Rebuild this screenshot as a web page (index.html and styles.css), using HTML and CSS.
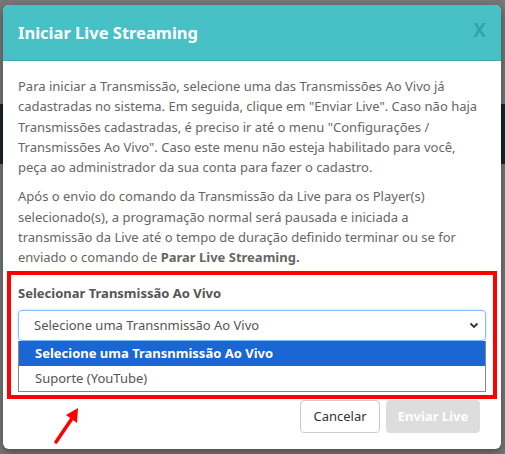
FILE: index.html
```html
<!DOCTYPE html>
<html lang="pt-BR">
<head>
    <meta charset="UTF-8">
    <meta name="viewport" content="width=device-width, initial-scale=1.0">
    <title>Iniciar Live Streaming</title>
    <link rel="stylesheet" href="styles.css">
</head>
<body>
    <div class="modal">
        <div class="modal-header">
            <h4 class="modal-title">Iniciar Live Streaming</h4>
            <span class="close">X</span>
        </div>

        <div class="modal-body">
            <p>Para iniciar a Transmissão, selecione uma das Transmissões Ao Vivo já cadastradas no sistema. Em seguida, clique em "Enviar Live". Caso não haja Transmissões cadastradas, é preciso ir até o menu "Configurações / Transmissões Ao Vivo". Caso este menu não esteja habilitado para você, peça ao administrador da sua conta para fazer o cadastro.</p>
            <p>Após o envio do comando da Transmissão da Live para os Player(s) selecionado(s), a programação normal será pausada e iniciada a transmissão da Live até o tempo de duração definido terminar ou se for enviado o comando de <b>Parar Live Streaming.</b></p>

            <div class="highlight">
                <label class="field-label">Selecionar Transmissão Ao Vivo</label>
                <div class="select-box">
                    <span>Selecione uma Transnmissão Ao Vivo</span>
                    <svg class="chevron" width="10" height="7" viewBox="0 0 10 7">
                        <path d="M1.5 1.5 L5 5 L8.5 1.5" fill="none" stroke="#333" stroke-width="1.8"/>
                    </svg>
                </div>
                <ul class="options">
                    <li class="selected">Selecione uma Transnmissão Ao Vivo</li>
                    <li>Suporte (YouTube)</li>
                </ul>
            </div>
        </div>

        <div class="modal-footer">
            <button class="btn btn-default">Cancelar</button>
            <button class="btn btn-disabled">Enviar Live</button>
        </div>

        <svg class="arrow" width="30" height="40" viewBox="0 0 30 40">
            <path d="M3 37 L20 12" stroke="#f00" stroke-width="3.5" stroke-linecap="round"/>
            <path d="M25 3 L13 10 L24 18 Z" fill="#f00"/>
        </svg>
    </div>
</body>
</html>
```

FILE: styles.css
```css
body {
    margin: 0;
    height: 454px;
    overflow: hidden;
    font-family: 'Noto Sans', 'Open Sans', sans-serif;
    background: linear-gradient(#777 0, #777 104px, #1d252b 104px, #1d252b 164px, #777 164px);
}
.modal {
    position: relative;
    margin: 5px 0 0 3px;
    width: 498px;
    height: 444px;
    background: #fff;
    border-radius: 6px;
    box-shadow: 0 3px 9px rgba(0, 0, 0, 0.4);
    overflow: hidden;
}
.modal-header {
    display: flex;
    align-items: center;
    justify-content: space-between;
    height: 55px;
    padding: 0 15px;
    background: #47c1c5;
    border-bottom: 1px solid #3aa9ad;
}
.modal-title {
    margin: 0;
    color: #fff;
    font-size: 16.5px;
    font-weight: 700;
}
.close {
    color: #37a3a7;
    font-size: 19px;
    font-weight: 700;
    margin-top: -6px;
}
.modal-body {
    padding: 15px 15px 0;
    color: #666;
    font-size: 13px;
    line-height: 20.3px;
}
.modal-body p {
    margin: 0 0 9px;
}
.highlight {
    margin: -6px -11px 0;
    padding: 8px 7px 3px;
    border: 4px solid #f00;
}
.field-label {
    display: block;
    font-weight: 700;
    color: #555;
    margin-bottom: 7px;
}
.select-box {
    display: flex;
    align-items: center;
    justify-content: space-between;
    height: 29px;
    padding: 0 6px 0 15px;
    border: 1px solid #80bdff;
    border-radius: 4px;
    box-shadow: 0 0 3px rgba(0, 123, 255, 0.25);
    color: #555;
}
.options {
    list-style: none;
    margin: 0;
    padding: 0;
    border: 1px solid #888;
    border-top: none;
}
.options li {
    height: 25px;
    line-height: 25px;
    padding-left: 16px;
    color: #555;
}
.options li.selected {
    background: #1a66d2;
    color: #fff;
    font-weight: 700;
}
.modal-footer {
    display: flex;
    justify-content: flex-end;
    gap: 6px;
    padding: 1px 21px 0 0;
}
.btn {
    height: 33px;
    padding: 0 12px;
    font-family: inherit;
    font-size: 13px;
    border-radius: 4px;
    white-space: nowrap;
}
.btn-default {
    background: #fff;
    border: 1px solid #ccc;
    color: #333;
    width: 80px;
}
.btn-disabled {
    background: #ddd;
    border: 1px solid #ddd;
    color: #fff;
    font-weight: 700;
    width: 94px;
    padding: 0 8px;
}
.arrow {
    position: absolute;
    left: 50px;
    top: 400px;
}
```
